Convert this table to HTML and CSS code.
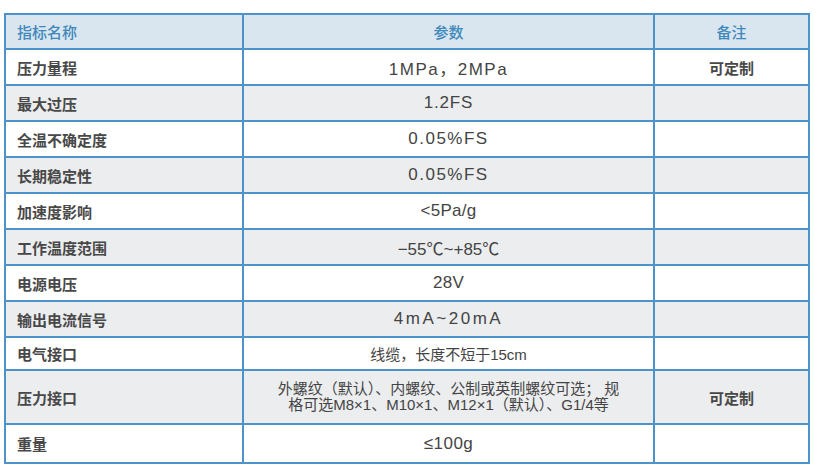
FILE: index.html
```html
<!DOCTYPE html>
<html lang="zh">
<head>
<meta charset="utf-8">
<link rel="stylesheet" href="styles.css">
</head>
<body>
<div class="wrap">
<table class="spec">
  <colgroup>
    <col class="c1"><col class="c2"><col class="c3">
  </colgroup>
  <thead>
    <tr class="head">
      <th class="name">指标名称</th>
      <th>参数</th>
      <th>备注</th>
    </tr>
  </thead>
  <tbody>
    <tr><td class="name">压力量程</td><td class="val ls15">1MPa，2MPa</td><td class="note">可定制</td></tr>
    <tr class="alt"><td class="name">最大过压</td><td class="val ls08">1.2FS</td><td class="note"></td></tr>
    <tr><td class="name">全温不确定度</td><td class="val ls15">0.05%FS</td><td class="note"></td></tr>
    <tr class="alt"><td class="name">长期稳定性</td><td class="val ls15">0.05%FS</td><td class="note"></td></tr>
    <tr><td class="name">加速度影响</td><td class="val ls03">&lt;5Pa/g</td><td class="note"></td></tr>
    <tr class="alt"><td class="name">工作温度范围</td><td class="val">−55℃~+85℃</td><td class="note"></td></tr>
    <tr><td class="name">电源电压</td><td class="val ls03">28V</td><td class="note"></td></tr>
    <tr class="alt"><td class="name">输出电流信号</td><td class="val ls25">4mA~20mA</td><td class="note"></td></tr>
    <tr class="short"><td class="name">电气接口</td><td class="val cn">线缆，长度不短于15cm</td><td class="note"></td></tr>
    <tr class="alt tall"><td class="name">压力接口</td><td class="val cn multi">外螺纹（默认）、内螺纹、公制或英制螺纹可选； 规<br>格可选M8×1、M10×1、M12×1（默认）、G1/4等</td><td class="note">可定制</td></tr>
    <tr class="last"><td class="name">重量</td><td class="val ls05">≤100g</td><td class="note"></td></tr>
  </tbody>
</table>
</div>
</body>
</html>
```

FILE: styles.css
```css
html, body {
  margin: 0;
  padding: 0;
  background: #ffffff;
}

.wrap {
  padding: 13px 0 0 4px;
}

.spec {
  border-collapse: collapse;
  width: 804px;
  table-layout: fixed;
  font-family: "Liberation Sans", "Noto Sans CJK SC", sans-serif;
  color: #3c3c3c;
}

.c1 { width: 238px; }
.c2 { width: 411px; }
.c3 { width: 155px; }

.spec th,
.spec td {
  border: 2px solid #4d93c9;
  padding: 0;
  height: 34px;
  text-align: center;
  vertical-align: middle;
}

.head th {
  background: #d9e6f0;
  color: #3f88bb;
  font-family: "Noto Sans CJK SC", sans-serif;
  font-weight: 500;
  font-size: 15px;
  height: 33px;
}

.spec .name {
  text-align: left;
  padding-left: 11px;
  font-family: "Noto Sans CJK SC", sans-serif;
  font-weight: 700;
  font-size: 15px;
  color: #484848;
}

.head th.name {
  color: #3f88bb;
  font-weight: 500;
}

.alt td {
  background: #ebedef;
}

.val {
  font-size: 17px;
  color: #444444;
}

.ls03 { letter-spacing: 0.3px; }
.ls05 { letter-spacing: 0.5px; }
.ls08 { letter-spacing: 0.8px; }
.ls15 { letter-spacing: 1.5px; }
.ls25 { letter-spacing: 2.5px; }

.val.cn {
  font-size: 15px;
  letter-spacing: 0;
}

.val.multi {
  line-height: 16px;
  padding: 0 10px;
}

.note {
  font-family: "Noto Sans CJK SC", sans-serif;
  font-weight: 700;
  font-size: 15px;
  color: #484848;
}

.short td { height: 31px; }
.tall td { height: 52px; }
.last td { height: 37px; }
```
